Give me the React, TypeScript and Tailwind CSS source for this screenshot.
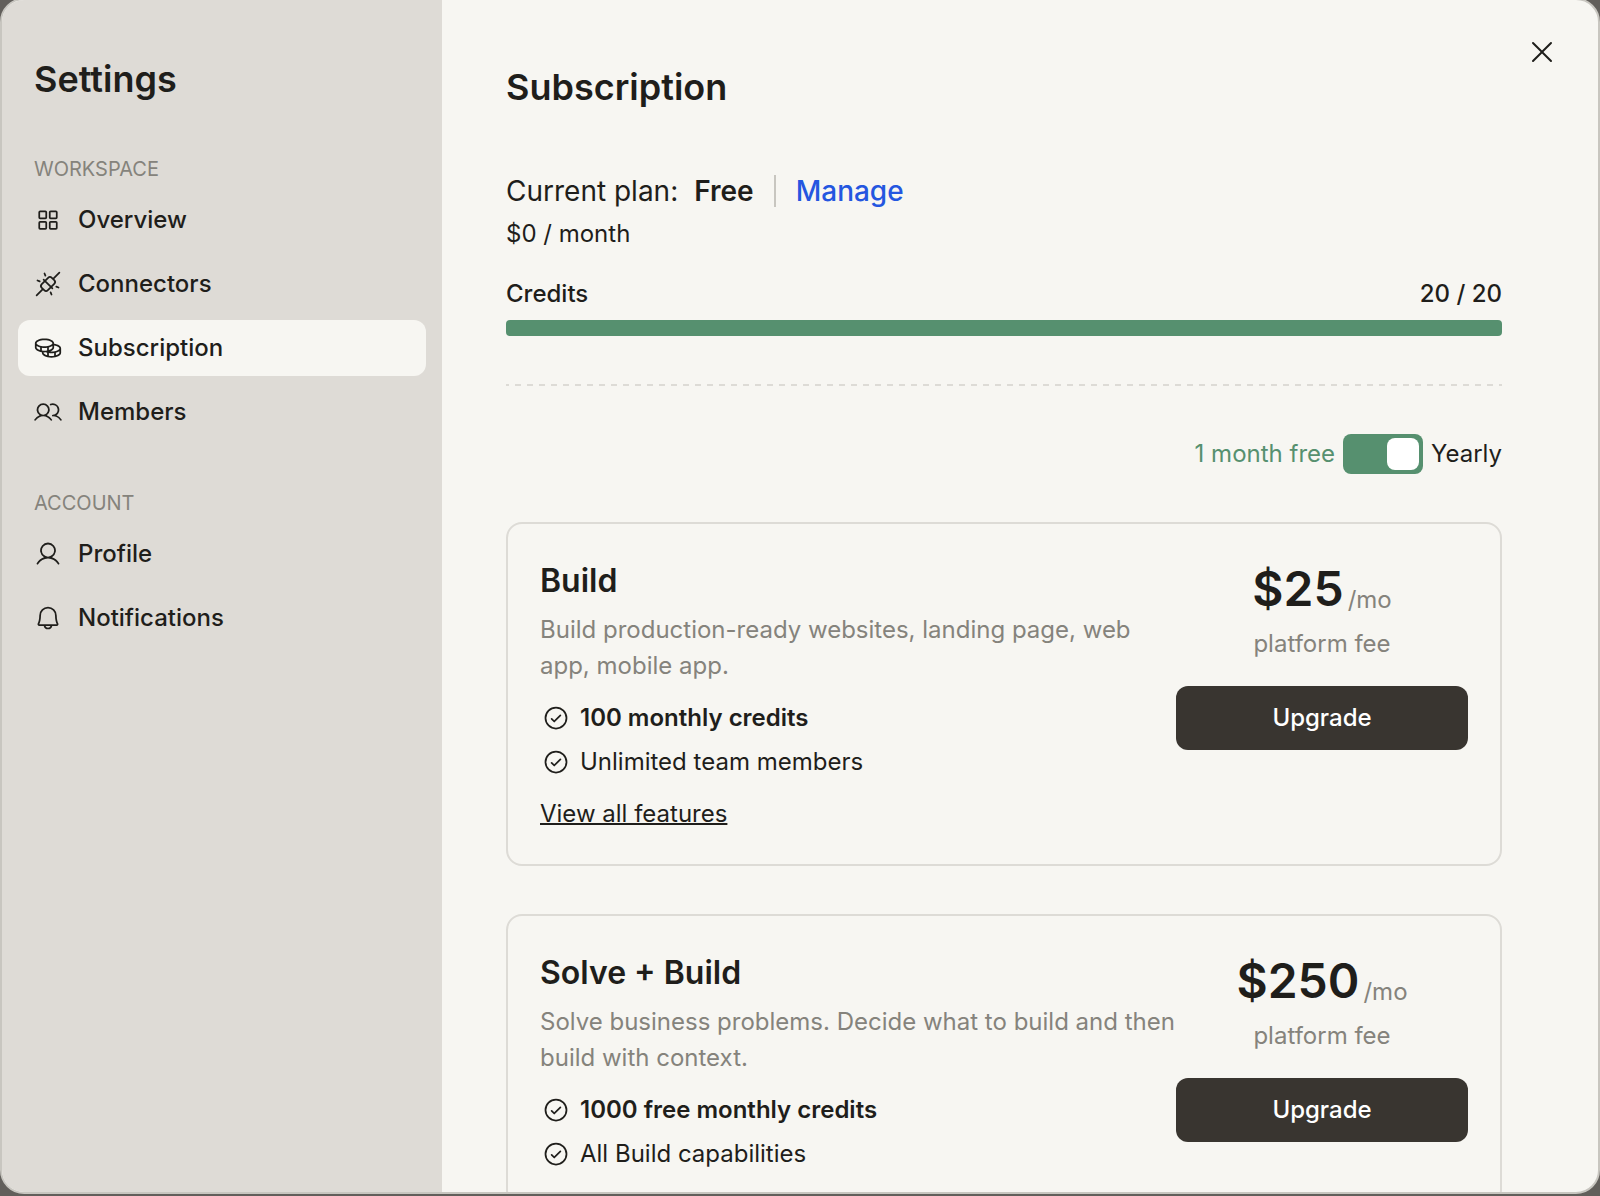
import { useState } from 'react';
import {
  PiBell,
  PiCheckCircle,
  PiCoins,
  PiPlugsConnected,
  PiSquaresFour,
  PiUser,
  PiUsers,
  PiX,
} from 'react-icons/pi';
import type { IconType } from 'react-icons';

type NavEntry = { label: string; icon: IconType };
type Plan = {
  name: string;
  description: string;
  price: string;
  highlight: string;
  feature: string;
  featuresHref?: string;
};

const sections: { title: string; items: NavEntry[] }[] = [
  {
    title: 'WORKSPACE',
    items: [
      { label: 'Overview', icon: PiSquaresFour },
      { label: 'Connectors', icon: PiPlugsConnected },
      { label: 'Subscription', icon: PiCoins },
      { label: 'Members', icon: PiUsers },
    ],
  },
  {
    title: 'ACCOUNT',
    items: [
      { label: 'Profile', icon: PiUser },
      { label: 'Notifications', icon: PiBell },
    ],
  },
];

const plans: Plan[] = [
  {
    name: 'Build',
    description: 'Build production-ready websites, landing page, web app, mobile app.',
    price: '$25',
    highlight: '100 monthly credits',
    feature: 'Unlimited team members',
    featuresHref: '#features',
  },
  {
    name: 'Solve + Build',
    description: 'Solve business problems. Decide what to build and then build with context.',
    price: '$250',
    highlight: '1000 free monthly credits',
    feature: 'All Build capabilities',
  },
];

function Sidebar() {
  const [active, setActive] = useState('Subscription');
  return (
    <aside className="w-[440px] shrink-0 bg-[#dedbd6] px-4 pt-[52px]">
      <h1 className="mb-12 px-4 text-4xl leading-[54px] font-semibold">Settings</h1>
      <nav aria-label="Settings" className="flex flex-col gap-12">
        {sections.map((section) => (
          <section key={section.title}>
            <h2 className="mb-2 px-4 text-xl leading-[30px] text-[#85837c]">{section.title}</h2>
            <ul className="flex flex-col gap-2">
              {section.items.map(({ label, icon: Icon }) => (
                <li key={label}>
                  <button
                    type="button"
                    onClick={() => setActive(label)}
                    aria-current={active === label ? 'page' : undefined}
                    className={
                      active === label
                        ? 'flex h-14 w-full items-center gap-4 rounded-xl bg-[#f7f6f2] px-4 text-2xl font-medium'
                        : 'flex h-14 w-full items-center gap-4 rounded-xl px-4 text-2xl font-medium'
                    }
                  >
                    <Icon className="size-7" aria-hidden />
                    {label}
                  </button>
                </li>
              ))}
            </ul>
          </section>
        ))}
      </nav>
    </aside>
  );
}

function PlanCard({ plan }: { plan: Plan }) {
  return (
    <article className="flex rounded-2xl border-2 border-[#dddbd6] p-8">
      <div className="min-w-0 flex-1">
        <h3 className="text-[32px] leading-[50px] font-semibold">{plan.name}</h3>
        <p className="mt-1.5 text-2xl leading-9 text-[#85837c]">{plan.description}</p>
        <ul className="mt-4 flex flex-col gap-2 text-2xl leading-9">
          <li className="flex items-center gap-2 font-semibold">
            <span className="flex w-8 justify-center">
              <PiCheckCircle className="size-7" aria-hidden />
            </span>
            {plan.highlight}
          </li>
          <li className="flex items-center gap-2">
            <span className="flex w-8 justify-center">
              <PiCheckCircle className="size-7" aria-hidden />
            </span>
            {plan.feature}
          </li>
        </ul>
        {plan.featuresHref && (
          <a
            href={plan.featuresHref}
            className="mt-4 inline-block text-2xl leading-9 underline decoration-2"
          >
            View all features
          </a>
        )}
      </div>
      <div className="w-[292px] shrink-0 text-center">
        <p className="flex items-end justify-center gap-1">
          <span className="text-5xl leading-[66px] font-semibold">{plan.price}</span>
          <span className="text-2xl leading-11 text-[#85837c]">/mo</span>
        </p>
        <p className="mt-1 text-2xl leading-9 text-[#85837c]">platform fee</p>
        <button
          type="button"
          className="mt-6 h-16 w-full rounded-xl bg-[#393530] text-2xl font-medium text-white"
        >
          Upgrade
        </button>
      </div>
    </article>
  );
}

export default function App() {
  const [yearly, setYearly] = useState(true);
  return (
    <div className="flex h-screen overflow-hidden bg-[#625f5b] pb-0.5 font-['Inter',sans-serif] text-[#1f1e1b]">
      <div
        role="dialog"
        aria-label="Settings"
        className="relative -mt-0.5 flex flex-1 overflow-hidden rounded-3xl border-2 border-[#c8c6c0] bg-[#f7f6f2]"
      >
        <Sidebar />
        <main className="min-w-0 flex-1 overflow-y-auto pt-[60px] pr-24 pb-16 pl-16 [scrollbar-width:none]">
          <h2 className="text-4xl leading-[54px] font-semibold">Subscription</h2>

          <div className="mt-14 flex h-[42px] items-center text-[28px] leading-[42px]">
            <span>Current plan:</span>
            <strong className="ml-4 font-semibold">Free</strong>
            <span className="mx-5 h-8 w-0.5 bg-[#c8c6c0]" />
            <a href="#manage" className="font-medium text-[#2456e0]">
              Manage
            </a>
          </div>
          <p className="mt-1 text-2xl leading-9">$0 / month</p>

          <div className="mt-6 flex justify-between text-2xl leading-9 font-medium">
            <span id="credits-label">Credits</span>
            <span>20 / 20</span>
          </div>
          <div
            role="progressbar"
            aria-labelledby="credits-label"
            aria-valuemin={0}
            aria-valuemax={20}
            aria-valuenow={20}
            className="mt-2 h-4 rounded bg-[#56906f]"
          />

          <hr className="mt-12 h-0.5 border-0 bg-[repeating-linear-gradient(to_right,#dddbd6_0_3px,transparent_3px_9px,#dddbd6_9px_12px)]" />

          <div className="mt-12 flex items-center justify-end gap-2 text-2xl leading-9">
            <span className="text-[#56906f]">1 month free</span>
            <input
              id="billing-yearly"
              type="checkbox"
              role="switch"
              checked={yearly}
              onChange={(event) => setYearly(event.target.checked)}
              className="h-10 w-20 appearance-none rounded-lg bg-[#c8c6c0] p-1 before:block before:size-8 before:rounded-lg before:bg-white checked:bg-[#56906f] checked:before:ml-auto"
            />
            <label htmlFor="billing-yearly">Yearly</label>
          </div>

          <div className="mt-12 flex flex-col gap-12">
            {plans.map((plan) => (
              <PlanCard key={plan.name} plan={plan} />
            ))}
          </div>
        </main>
        <button type="button" aria-label="Close" className="absolute top-9 right-10">
          <PiX className="size-8" aria-hidden />
        </button>
      </div>
    </div>
  );
}
